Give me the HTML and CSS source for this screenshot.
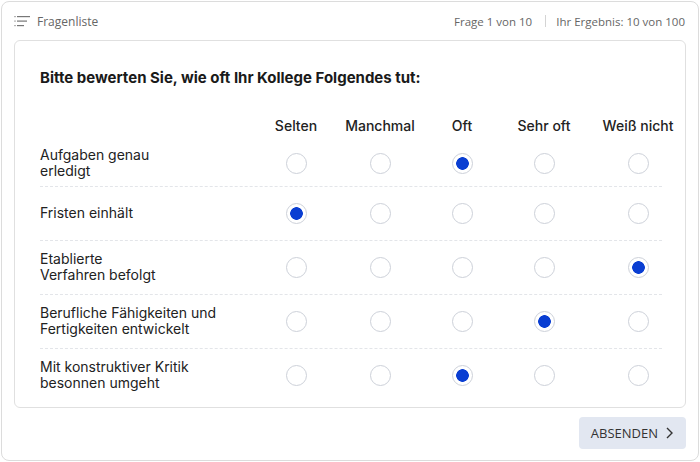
FILE: index.html
```html
<!DOCTYPE html>
<html lang="de">
<head>
  <meta charset="UTF-8" />
  <meta name="viewport" content="width=device-width, initial-scale=1.0" />
  <title>Bewertung</title>
  <link rel="stylesheet" href="styles.css">
</head>
<body>
  <div class="frame">
    <div class="topbar">
      <div class="topbar-left">
        <svg class="list-icon" width="16" height="11" viewBox="0 0 16 11">
          <rect x="0" y="0" width="2" height="1.2" fill="#b5b5b5" />
          <rect x="3" y="0" width="13" height="1.2" fill="#777" />
          <rect x="0" y="4.5" width="2" height="1.2" fill="#b5b5b5" />
          <rect x="3" y="4.5" width="10" height="1.2" fill="#777" />
          <rect x="0" y="9" width="2" height="1.2" fill="#b5b5b5" />
          <rect x="3" y="9" width="7" height="1.2" fill="#777" />
        </svg>
        <span>Fragenliste</span>
      </div>
      <div class="topbar-right">
        <span>Frage 1 von 10</span>
        <span class="sep"></span>
        <span>Ihr Ergebnis: 10 von 100</span>
      </div>
    </div>

    <div class="card">
      <h1 class="question">Bitte bewerten Sie, wie oft Ihr Kollege Folgendes tut:</h1>

      <div class="grid head">
        <div></div>
        <div class="cell">Selten</div>
        <div class="cell">Manchmal</div>
        <div class="cell">Oft</div>
        <div class="cell">Sehr oft</div>
        <div class="cell">Weiß nicht</div>
      </div>

      <div class="rows">
        <div class="grid row">
          <div class="label">Aufgaben genau<br>erledigt</div>
          <div class="cell"><input type="radio" name="q1"></div>
          <div class="cell"><input type="radio" name="q1"></div>
          <div class="cell"><input type="radio" name="q1" checked></div>
          <div class="cell"><input type="radio" name="q1"></div>
          <div class="cell"><input type="radio" name="q1"></div>
        </div>
        <div class="grid row">
          <div class="label">Fristen einhält</div>
          <div class="cell"><input type="radio" name="q2" checked></div>
          <div class="cell"><input type="radio" name="q2"></div>
          <div class="cell"><input type="radio" name="q2"></div>
          <div class="cell"><input type="radio" name="q2"></div>
          <div class="cell"><input type="radio" name="q2"></div>
        </div>
        <div class="grid row">
          <div class="label">Etablierte<br>Verfahren befolgt</div>
          <div class="cell"><input type="radio" name="q3"></div>
          <div class="cell"><input type="radio" name="q3"></div>
          <div class="cell"><input type="radio" name="q3"></div>
          <div class="cell"><input type="radio" name="q3"></div>
          <div class="cell"><input type="radio" name="q3" checked></div>
        </div>
        <div class="grid row">
          <div class="label">Berufliche Fähigkeiten und<br>Fertigkeiten entwickelt</div>
          <div class="cell"><input type="radio" name="q4"></div>
          <div class="cell"><input type="radio" name="q4"></div>
          <div class="cell"><input type="radio" name="q4"></div>
          <div class="cell"><input type="radio" name="q4" checked></div>
          <div class="cell"><input type="radio" name="q4"></div>
        </div>
        <div class="grid row">
          <div class="label">Mit konstruktiver Kritik<br>besonnen umgeht</div>
          <div class="cell"><input type="radio" name="q5"></div>
          <div class="cell"><input type="radio" name="q5"></div>
          <div class="cell"><input type="radio" name="q5" checked></div>
          <div class="cell"><input type="radio" name="q5"></div>
          <div class="cell"><input type="radio" name="q5"></div>
        </div>
      </div>
    </div>

    <div class="footer">
      <button class="submit">ABSENDEN
        <svg width="7" height="12" viewBox="0 0 7 12"><path d="M1 1 L6 6 L1 11" fill="none" stroke="#333" stroke-width="1.4" /></svg>
      </button>
    </div>
  </div>
</body>
</html>
```

FILE: styles.css
```css
body {
  margin: 0;
  padding: 0;
  background: #fff;
  font-family: 'Inter', 'Noto Sans', sans-serif;
  color: #1f1f1f;
}

.frame {
  box-sizing: border-box;
  margin: 1px;
  width: 698px;
  height: 460px;
  border: 1px solid #dcdcdc;
  border-radius: 8px;
}

.topbar {
  height: 38px;
  padding: 0 13px 0 12px;
  display: flex;
  align-items: center;
  justify-content: space-between;
  font-family: 'Open Sans', sans-serif;
  font-size: 11.5px;
  color: #666;
}

.topbar-left {
  display: flex;
  align-items: center;
  gap: 7px;
  font-size: 12px;
}

.topbar-right {
  display: flex;
  align-items: center;
}

.sep {
  width: 1px;
  height: 12px;
  background: #d4d4d4;
  margin: 0 10px 0 13px;
}

.card {
  box-sizing: border-box;
  margin: 0 12px;
  height: 368px;
  border: 1px solid #e0e0e0;
  border-radius: 6px;
  padding: 27px 23px 0 25px;
}

.question {
  margin: 0;
  font-size: 15px;
  line-height: 20px;
  font-weight: 700;
  color: #1a1a1a;
}

.grid {
  display: grid;
  grid-template-columns: 214px 84px 84px 80px 84px 76px;
  align-items: center;
}

.cell {
  display: flex;
  justify-content: center;
  white-space: nowrap;
}

.grid .cell:last-child {
  padding-left: 28px;
}

.head {
  margin-top: 28px;
  padding-bottom: 4px;
  font-size: 14px;
  line-height: 20px;
  font-weight: 500;
  color: #222;
}

.row {
  padding: 10px 0 11px;
  border-top: 1px dashed #e3e5e9;
}

.rows .row:first-child {
  border-top: none;
  padding: 7px 0;
}

.label {
  min-height: 32px;
  display: flex;
  align-items: center;
  font-size: 14px;
  line-height: 16px;
  color: #222;
}

input[type="radio"] {
  appearance: none;
  -webkit-appearance: none;
  margin: 0;
  width: 21px;
  height: 21px;
  border: 1px solid #cdd1d9;
  border-radius: 50%;
  background: #fff;
  box-sizing: border-box;
  cursor: pointer;
}

input[type="radio"]:checked {
  background: radial-gradient(circle, #0a3ed2 0 6px, #fff 6.6px);
}

.footer {
  display: flex;
  justify-content: flex-end;
  padding: 9px 12px 0;
}

.submit {
  display: flex;
  align-items: center;
  gap: 8px;
  height: 32px;
  padding: 0 13px 0 12px;
  border: none;
  border-radius: 4px;
  background: #e2e7f1;
  font-family: 'Open Sans', sans-serif;
  font-size: 13px;
  color: #333;
  cursor: pointer;
}
```
